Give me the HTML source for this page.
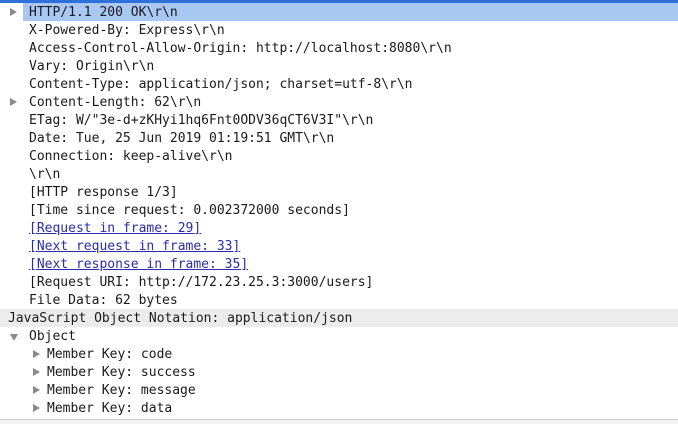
<!DOCTYPE html>
<html><head><style>
body{margin:0;width:678px;height:424px;background:#fff;overflow:hidden;position:relative;font-family:"DejaVu Sans Mono","Liberation Mono",monospace;font-size:13px;color:#1a1a1a}
.top{position:absolute;left:0;top:0;width:678px;height:3px;background:#2f6fd8}
.r{position:absolute;left:0;width:678px;height:18px;line-height:18px;white-space:pre}
.t{position:absolute;left:29px;top:1px}
.tri{position:absolute;width:0;height:0;border-top:4px solid transparent;border-bottom:4px solid transparent;border-left:7px solid #8a8a8a}
.dn{position:absolute;width:0;height:0;border-left:4px solid transparent;border-right:4px solid transparent;border-top:7px solid #8a8a8a}
a{color:#2c2ca8;text-decoration:underline}
</style></head><body>
<div class="top"></div>
<div class="r" style="top:3px"><div style="position:absolute;left:23px;top:0;width:655px;height:18px;background:#a8c7f3"></div><div class="tri" style="left:10px;top:5px"></div><span class="t">HTTP/1.1 200 OK\r\n</span></div>
<div class="r" style="top:21px"><span class="t">X-Powered-By: Express\r\n</span></div>
<div class="r" style="top:39px"><span class="t">Access-Control-Allow-Origin: http://localhost:8080\r\n</span></div>
<div class="r" style="top:57px"><span class="t">Vary: Origin\r\n</span></div>
<div class="r" style="top:75px"><span class="t">Content-Type: application/json; charset=utf-8\r\n</span></div>
<div class="r" style="top:93px"><div class="tri" style="left:10px;top:5px"></div><span class="t">Content-Length: 62\r\n</span></div>
<div class="r" style="top:111px"><span class="t">ETag: W/"3e-d+zKHyi1hq6Fnt0ODV36qCT6V3I"\r\n</span></div>
<div class="r" style="top:129px"><span class="t">Date: Tue, 25 Jun 2019 01:19:51 GMT\r\n</span></div>
<div class="r" style="top:147px"><span class="t">Connection: keep-alive\r\n</span></div>
<div class="r" style="top:165px"><span class="t">\r\n</span></div>
<div class="r" style="top:183px"><span class="t">[HTTP response 1/3]</span></div>
<div class="r" style="top:201px"><span class="t">[Time since request: 0.002372000 seconds]</span></div>
<div class="r" style="top:219px"><span class="t"><a>[Request in frame: 29]</a></span></div>
<div class="r" style="top:237px"><span class="t"><a>[Next request in frame: 33]</a></span></div>
<div class="r" style="top:255px"><span class="t"><a>[Next response in frame: 35]</a></span></div>
<div class="r" style="top:273px"><span class="t">[Request URI: http://172.23.25.3:3000/users]</span></div>
<div class="r" style="top:291px"><span class="t">File Data: 62 bytes</span></div>
<div class="r" style="top:309px;background:#ececec"><span class="t" style="left:8px">JavaScript Object Notation: application/json</span></div>
<div class="r" style="top:327px"><div class="dn" style="left:10px;top:7px"></div><span class="t">Object</span></div>
<div class="r" style="top:345px"><div class="tri" style="left:33px;top:5px"></div><span class="t" style="left:47px">Member Key: code</span></div>
<div class="r" style="top:363px"><div class="tri" style="left:33px;top:5px"></div><span class="t" style="left:47px">Member Key: success</span></div>
<div class="r" style="top:381px"><div class="tri" style="left:33px;top:5px"></div><span class="t" style="left:47px">Member Key: message</span></div>
<div class="r" style="top:399px"><div class="tri" style="left:33px;top:5px"></div><span class="t" style="left:47px">Member Key: data</span></div>
<div style="position:absolute;left:0;top:419px;width:678px;height:1px;background:#c8c8c8"></div>
<div style="position:absolute;left:0;top:420px;width:678px;height:4px;background:#f4f4f4"></div>
</body></html>
